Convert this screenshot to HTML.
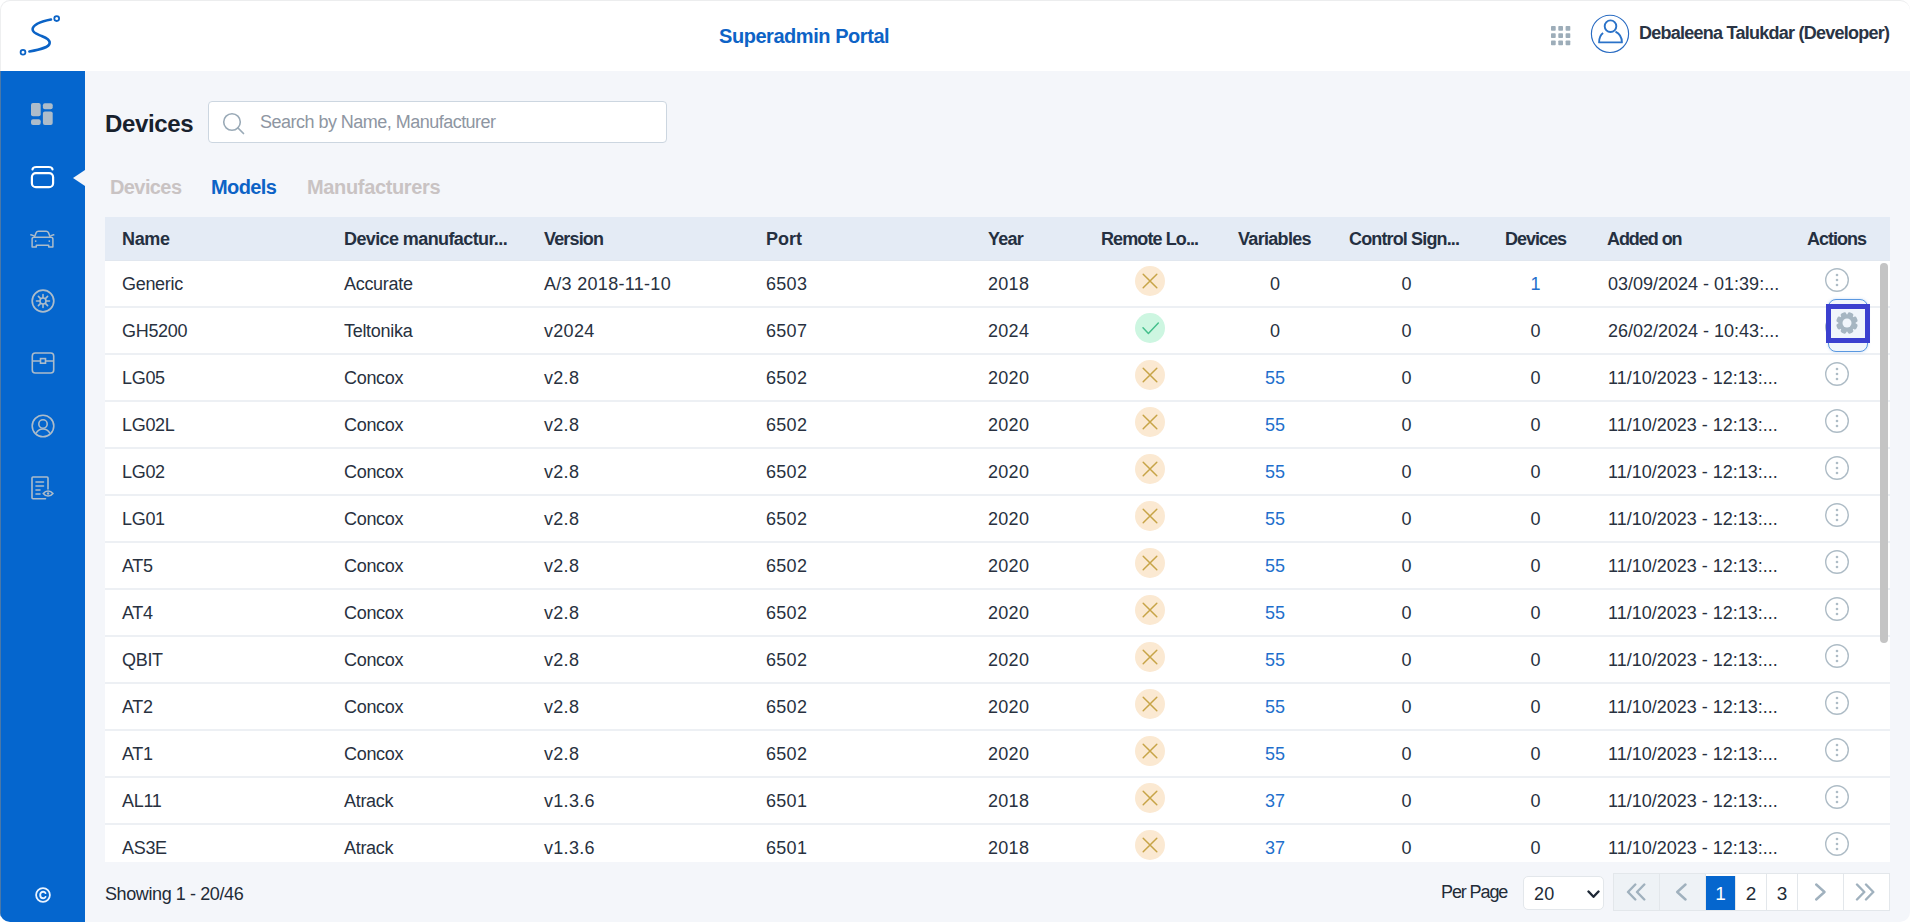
<!DOCTYPE html>
<html>
<head>
<meta charset="utf-8">
<style>
*{box-sizing:border-box;margin:0;padding:0}
html,body{width:1910px;height:922px;overflow:hidden;background:#ffffff;font-family:"Liberation Sans",sans-serif;color:#1E2836}
#app{position:absolute;left:0;top:0;width:1910px;height:922px;border-radius:10px;overflow:hidden;background:#F4F6FA}
#frame{position:absolute;left:0;top:0;width:1910px;height:71px;border-radius:10px 10px 0 0;border-top:1px solid #ECEDEE;border-left:1px solid #EEEFF0;pointer-events:none}
#hdr{position:absolute;left:0;top:0;width:1910px;height:71px;background:#fff}
#side{position:absolute;left:0;top:71px;width:85px;height:851px;background:#0566CE}
.abs{position:absolute}
.portal{position:absolute;left:719px;top:25.2px;font-size:20px;font-weight:bold;color:#0D63C6;letter-spacing:-0.45px;white-space:nowrap}
.uname{position:absolute;left:1639px;top:22.5px;font-size:18px;font-weight:bold;color:#2A3444;letter-spacing:-0.75px;white-space:nowrap}
.title{position:absolute;left:105px;top:110px;font-size:24px;font-weight:bold;color:#18212D;letter-spacing:-0.35px}
#search{position:absolute;left:208px;top:101px;width:459px;height:42px;background:#fff;border:1px solid #CCD6E0;border-radius:4px}
#search .ph{position:absolute;left:51px;top:10.2px;font-size:18px;color:#8E96A2;white-space:nowrap;letter-spacing:-0.52px}
.tab{position:absolute;top:176px;font-size:20px;font-weight:bold;white-space:nowrap;letter-spacing:-0.6px}
#thead{position:absolute;left:105px;top:217px;width:1785px;height:44px;background:#E4EBF5;border-bottom:1px solid #E1E7EF}
.h{position:absolute;top:11.5px;font-size:18px;font-weight:bold;color:#253041;white-space:nowrap;letter-spacing:-0.35px}
#tbody{position:absolute;left:105px;top:261px;width:1785px;height:601px;overflow:hidden}
.row{position:absolute;left:0;width:1785px;height:47px;background:#fff;border-bottom:2px solid #EDF0F4}
.t{position:absolute;top:12.5px;font-size:18px;color:#283140;white-space:nowrap;letter-spacing:-0.3px}
.t.d{letter-spacing:0.3px}
.c{position:absolute;top:12.5px;width:80px;text-align:center;font-size:18px;color:#283140;white-space:nowrap}
.c.blue{color:#1F6FCC}
.ic{position:absolute;top:5px;width:30px;height:30px}
.ic svg,.act svg{display:block}
.act{position:absolute;top:6px;width:26px;height:26px}
#scroll{position:absolute;left:1880px;top:263px;width:8px;height:380px;background:#C4C4C4;border-radius:4px}
.foot{position:absolute;font-size:18px;color:#222B37;white-space:nowrap;letter-spacing:-0.4px}
#sel{position:absolute;left:1523px;top:876px;width:81px;height:34px;background:#fff;border:1px solid #E3E7EB;border-radius:5px}
#pag{position:absolute;left:1613px;top:873px;width:277px;height:38px;background:#fff;border:1px solid #E3E7EB}
.pc{position:absolute;top:0;height:36px;border-right:1px solid #E3E7EB;font-size:19px;color:#222B37;text-align:center;line-height:36px;padding-top:1.5px}
</style>
</head>
<body>
<div id="app">
  <div id="hdr">
    <svg class="abs" style="left:16px;top:13px" width="48" height="46" viewBox="16 13 48 46">
      <path d="M51 19.6 C44 21 33.2 23.5 32.6 29.2 C32.3 33 38 34.6 41.2 35.9 C45 37.4 49.9 39.2 49.7 42.9 C49.4 47.6 40 49.6 29.4 51.5" fill="none" stroke="#0B63C6" stroke-width="2.6" stroke-linecap="round"/>
      <circle cx="56.7" cy="18.6" r="2.4" fill="none" stroke="#0B63C6" stroke-width="1.8"/>
      <circle cx="23" cy="52.3" r="2.4" fill="none" stroke="#0B63C6" stroke-width="1.8"/>
    </svg>
    <div class="portal">Superadmin Portal</div>
    <svg class="abs" style="left:1550.6px;top:26.3px" width="20" height="20" viewBox="0 0 20 20">
      <g fill="#9DADB9"><rect x="0.0" y="0.0" width="4.7" height="4.8" rx="0.8"/><rect x="7.3" y="0.0" width="4.7" height="4.8" rx="0.8"/><rect x="14.6" y="0.0" width="4.7" height="4.8" rx="0.8"/><rect x="0.0" y="7.2" width="4.7" height="4.8" rx="0.8"/><rect x="7.3" y="7.2" width="4.7" height="4.8" rx="0.8"/><rect x="14.6" y="7.2" width="4.7" height="4.8" rx="0.8"/><rect x="0.0" y="14.4" width="4.7" height="4.8" rx="0.8"/><rect x="7.3" y="14.4" width="4.7" height="4.8" rx="0.8"/><rect x="14.6" y="14.4" width="4.7" height="4.8" rx="0.8"/></g>
    </svg>
    <svg class="abs" style="left:1590px;top:14px" width="40" height="40" viewBox="0 0 40 40">
      <circle cx="20" cy="19.85" r="18.6" fill="none" stroke="#2A6CC2" stroke-width="1.15"/>
      <circle cx="20.5" cy="12.2" r="5.8" fill="none" stroke="#2A72C8" stroke-width="1.9"/>
      <path d="M13.1 18.9 C10.3 20.9 9.1 24.3 9.1 28.4 L31.9 28.4 C31.9 24 29.6 19.6 25.5 17.6" fill="none" stroke="#2A72C8" stroke-width="1.9" stroke-linejoin="round"/>
    </svg>
    <div class="uname">Debaleena Talukdar (Developer)</div>
  </div>

  <div id="side">
    <!-- dashboard -->
    <svg class="abs" style="left:31.4px;top:31.8px" width="23" height="23" viewBox="0 0 23 23">
      <g fill="#ADBCCA">
        <rect x="0" y="0" width="9.7" height="13.3" rx="2"/>
        <rect x="0" y="16.2" width="9.7" height="5.8" rx="2"/>
        <rect x="11.9" y="0.3" width="9.8" height="6" rx="2"/>
        <rect x="11.9" y="8.5" width="9.8" height="13.5" rx="2"/>
      </g>
    </svg>
    <!-- cards (active) -->
    <svg class="abs" style="left:30px;top:93px" width="25" height="26" viewBox="0 0 25 26">
      <path d="M2.5 5.5 C2.6 3.8 3.8 3 6.5 3 L18.5 3 C21.2 3 22.4 3.8 22.5 5.5" fill="none" stroke="#fff" stroke-width="2.2" stroke-linecap="round"/>
      <rect x="1.9" y="9.1" width="21.2" height="14.1" rx="4" fill="none" stroke="#fff" stroke-width="2.2"/>
    </svg>
    <svg class="abs" style="left:73px;top:98.5px" width="12" height="16" viewBox="0 0 12 16"><path d="M12 0 L0 8 L12 16 Z" fill="#F4F6FA"/></svg>
    <!-- car -->
    <svg class="abs" style="left:30px;top:158px" width="25" height="20" viewBox="0 0 25 20">
      <g fill="none" stroke="#ADBCCA" stroke-width="1.5" stroke-linejoin="round" stroke-linecap="round">
        <path d="M4.3 8.3 L6.2 3.6 C6.6 2.7 7.3 2.3 8.4 2.3 L16.2 2.3 C17.3 2.3 18 2.7 18.4 3.6 L20.3 8.3"/>
        <path d="M2.1 10.3 C2.1 9 2.8 8.3 4 8.3 L21 8.3 C22.2 8.3 22.9 9 22.9 10.3 L22.9 18 L18.7 18 L18.7 16.2 L6.3 16.2 L6.3 18 L2.1 18 Z"/>
        <path d="M0.9 5.8 L3.6 6.6 M23.7 5.8 L21 6.6"/>
      </g>
      <circle cx="5.7" cy="12.1" r="0.9" fill="#ADBCCA"/><circle cx="19.3" cy="12.1" r="0.9" fill="#ADBCCA"/>
    </svg>
    <!-- sun -->
    <svg class="abs" style="left:30.5px;top:218px" width="24" height="24" viewBox="0 0 24 24">
      <circle cx="12" cy="12" r="10.8" fill="none" stroke="#ADBCCA" stroke-width="1.7"/>
      <g stroke="#ADBCCA" stroke-width="1.6" stroke-linecap="round">
        <path d="M12 5.5 L12 18.5 M5.5 12 L18.5 12 M7.4 7.4 L16.6 16.6 M16.6 7.4 L7.4 16.6"/>
      </g>
      <circle cx="12" cy="12" r="3" fill="#0566CE" stroke="#ADBCCA" stroke-width="1.6"/>
    </svg>
    <!-- box -->
    <svg class="abs" style="left:30.7px;top:280px" width="24" height="24" viewBox="0 0 24 24">
      <g fill="none" stroke="#ADBCCA" stroke-width="1.6">
        <rect x="1.3" y="2" width="21.4" height="20" rx="3"/>
        <path d="M1.3 10 L9.5 10 M14.5 10 L22.7 10"/>
        <rect x="9.5" y="7.6" width="5" height="4.6"/>
      </g>
    </svg>
    <!-- user circle -->
    <svg class="abs" style="left:30.5px;top:343px" width="24" height="24" viewBox="0 0 24 24">
      <g fill="none" stroke="#ADBCCA" stroke-width="1.6">
        <circle cx="12" cy="12" r="10.8"/>
        <circle cx="12" cy="10" r="4.2"/>
        <path d="M5 19.5 C6.5 16.5 9 15 12 15 C15 15 17.5 16.5 19 19.5"/>
      </g>
    </svg>
    <!-- doc eye -->
    <svg class="abs" style="left:31px;top:405px" width="24" height="25" viewBox="0 0 24 25">
      <g fill="none" stroke="#ADBCCA" stroke-width="1.6" stroke-linecap="round">
        <path d="M14.5 22.8 L2 22.8 C1.4 22.8 1 22.4 1 21.8 L1 2 C1 1.4 1.4 1 2 1 L16 1 C16.6 1 17 1.4 17 2 L17 13"/>
        <path d="M5 6 L12.5 6 M5 10 L12.5 10 M5 14 L9 14 M5 18 L9 18"/>
        <path d="M12.3 17.5 C13.6 15.8 15.2 15 17.1 15 C19 15 20.6 15.8 21.9 17.5 C20.6 19.2 19 20 17.1 20 C15.2 20 13.6 19.2 12.3 17.5 Z"/>
      </g>
      <circle cx="17.1" cy="17.5" r="1.2" fill="#ADBCCA"/>
    </svg>
    <!-- copyright -->
    <svg class="abs" style="left:34.5px;top:815.5px" width="16" height="16" viewBox="0 0 16 16">
      <circle cx="8" cy="8" r="6.9" fill="none" stroke="#EAF3FF" stroke-width="1.8"/>
      <path d="M10.5 6.1 C10 5.1 9.2 4.7 8.2 4.7 C6.4 4.7 5.2 6.1 5.2 8 C5.2 9.9 6.4 11.3 8.2 11.3 C9.2 11.3 10 10.9 10.5 9.9" fill="none" stroke="#EAF3FF" stroke-width="1.9" stroke-linecap="round"/>
    </svg>
  </div>

  <div class="abs" style="left:0;top:71px;width:1px;height:851px;background:#4A78A8"></div>
  <div class="title">Devices</div>
  <div id="search">
    <svg class="abs" style="left:13px;top:10px" width="24" height="24" viewBox="0 0 24 24">
      <circle cx="10" cy="10" r="8.3" fill="none" stroke="#9AAAB7" stroke-width="1.6"/>
      <path d="M16 16 L21.5 21.5" stroke="#9AAAB7" stroke-width="1.7" stroke-linecap="round"/>
    </svg>
    <div class="ph">Search by Name, Manufacturer</div>
  </div>
  <div class="tab" style="left:110px;color:#C9C3C3">Devices</div>
  <div class="tab" style="left:211px;color:#0D63C6">Models</div>
  <div class="tab" style="left:307px;color:#C9C3C3;letter-spacing:-0.35px">Manufacturers</div>

  <div id="thead"><span class="h" style="left:17px;letter-spacing:-0.35px">Name</span><span class="h" style="left:239px;letter-spacing:-0.6px">Device manufactur...</span><span class="h" style="left:439px;letter-spacing:-0.85px">Version</span><span class="h" style="left:661px;letter-spacing:0px">Port</span><span class="h" style="left:883px;letter-spacing:-0.78px">Year</span><span class="h" style="left:996px;letter-spacing:-0.9px">Remote Lo...</span><span class="h" style="left:1133px;letter-spacing:-0.69px">Variables</span><span class="h" style="left:1244px;letter-spacing:-0.86px">Control Sign...</span><span class="h" style="left:1400px;letter-spacing:-1.0px">Devices</span><span class="h" style="left:1502px;letter-spacing:-1.06px">Added on</span><span class="h" style="left:1702px;letter-spacing:-1.0px">Actions</span></div>
  <div id="tbody">
<div class="row" style="top:0px"><span class="t" style="left:17px">Generic</span><span class="t" style="left:239px">Accurate</span><span class="t d" style="left:439px">A/3 2018-11-10</span><span class="t d" style="left:661px">6503</span><span class="t d" style="left:883px">2018</span><span class="ic" style="left:1030px"><svg width="30" height="30" viewBox="0 0 30 30"><circle cx="15" cy="15" r="15" fill="#FBE9D2"/><path d="M8.2 8.2 L21.8 21.8 M21.8 8.2 L8.2 21.8" stroke="#C7A447" stroke-width="1.5" stroke-linecap="round"/></svg></span><span class="c" style="left:1130px">0</span><span class="c" style="left:1261.5px">0</span><span class="c blue" style="left:1390.5px">1</span><span class="t" style="left:1503px;letter-spacing:0px">03/09/2024 - 01:39:...</span><span class="act" style="left:1719px"><svg width="26" height="26" viewBox="0 0 26 26"><circle cx="13" cy="13" r="11.3" fill="none" stroke="#AEBCC6" stroke-width="1.4"/><circle cx="13" cy="8" r="1.3" fill="#AEBCC6"/><circle cx="13" cy="13" r="1.3" fill="#AEBCC6"/><circle cx="13" cy="18" r="1.3" fill="#AEBCC6"/></svg></span></div>
<div class="row" style="top:47px"><span class="t" style="left:17px">GH5200</span><span class="t" style="left:239px">Teltonika</span><span class="t d" style="left:439px">v2024</span><span class="t d" style="left:661px">6507</span><span class="t d" style="left:883px">2024</span><span class="ic" style="left:1030px"><svg width="30" height="30" viewBox="0 0 30 30"><circle cx="15" cy="15" r="15" fill="#CDF6E1"/><path d="M8 14.8 L13.4 20.4 L23.3 10" fill="none" stroke="#45BF8C" stroke-width="1.5" stroke-linecap="round" stroke-linejoin="round"/></svg></span><span class="c" style="left:1130px">0</span><span class="c" style="left:1261.5px">0</span><span class="c" style="left:1390.5px">0</span><span class="t" style="left:1503px;letter-spacing:0px">26/02/2024 - 10:43:...</span><span class="act" style="left:1719px"><svg width="26" height="26" viewBox="0 0 26 26"><circle cx="13" cy="13" r="11.3" fill="none" stroke="#AEBCC6" stroke-width="1.4"/><circle cx="13" cy="8" r="1.3" fill="#AEBCC6"/><circle cx="13" cy="13" r="1.3" fill="#AEBCC6"/><circle cx="13" cy="18" r="1.3" fill="#AEBCC6"/></svg></span></div>
<div class="row" style="top:94px"><span class="t" style="left:17px">LG05</span><span class="t" style="left:239px">Concox</span><span class="t d" style="left:439px">v2.8</span><span class="t d" style="left:661px">6502</span><span class="t d" style="left:883px">2020</span><span class="ic" style="left:1030px"><svg width="30" height="30" viewBox="0 0 30 30"><circle cx="15" cy="15" r="15" fill="#FBE9D2"/><path d="M8.2 8.2 L21.8 21.8 M21.8 8.2 L8.2 21.8" stroke="#C7A447" stroke-width="1.5" stroke-linecap="round"/></svg></span><span class="c blue" style="left:1130px">55</span><span class="c" style="left:1261.5px">0</span><span class="c" style="left:1390.5px">0</span><span class="t" style="left:1503px;letter-spacing:0px">11/10/2023 - 12:13:...</span><span class="act" style="left:1719px"><svg width="26" height="26" viewBox="0 0 26 26"><circle cx="13" cy="13" r="11.3" fill="none" stroke="#AEBCC6" stroke-width="1.4"/><circle cx="13" cy="8" r="1.3" fill="#AEBCC6"/><circle cx="13" cy="13" r="1.3" fill="#AEBCC6"/><circle cx="13" cy="18" r="1.3" fill="#AEBCC6"/></svg></span></div>
<div class="row" style="top:141px"><span class="t" style="left:17px">LG02L</span><span class="t" style="left:239px">Concox</span><span class="t d" style="left:439px">v2.8</span><span class="t d" style="left:661px">6502</span><span class="t d" style="left:883px">2020</span><span class="ic" style="left:1030px"><svg width="30" height="30" viewBox="0 0 30 30"><circle cx="15" cy="15" r="15" fill="#FBE9D2"/><path d="M8.2 8.2 L21.8 21.8 M21.8 8.2 L8.2 21.8" stroke="#C7A447" stroke-width="1.5" stroke-linecap="round"/></svg></span><span class="c blue" style="left:1130px">55</span><span class="c" style="left:1261.5px">0</span><span class="c" style="left:1390.5px">0</span><span class="t" style="left:1503px;letter-spacing:0px">11/10/2023 - 12:13:...</span><span class="act" style="left:1719px"><svg width="26" height="26" viewBox="0 0 26 26"><circle cx="13" cy="13" r="11.3" fill="none" stroke="#AEBCC6" stroke-width="1.4"/><circle cx="13" cy="8" r="1.3" fill="#AEBCC6"/><circle cx="13" cy="13" r="1.3" fill="#AEBCC6"/><circle cx="13" cy="18" r="1.3" fill="#AEBCC6"/></svg></span></div>
<div class="row" style="top:188px"><span class="t" style="left:17px">LG02</span><span class="t" style="left:239px">Concox</span><span class="t d" style="left:439px">v2.8</span><span class="t d" style="left:661px">6502</span><span class="t d" style="left:883px">2020</span><span class="ic" style="left:1030px"><svg width="30" height="30" viewBox="0 0 30 30"><circle cx="15" cy="15" r="15" fill="#FBE9D2"/><path d="M8.2 8.2 L21.8 21.8 M21.8 8.2 L8.2 21.8" stroke="#C7A447" stroke-width="1.5" stroke-linecap="round"/></svg></span><span class="c blue" style="left:1130px">55</span><span class="c" style="left:1261.5px">0</span><span class="c" style="left:1390.5px">0</span><span class="t" style="left:1503px;letter-spacing:0px">11/10/2023 - 12:13:...</span><span class="act" style="left:1719px"><svg width="26" height="26" viewBox="0 0 26 26"><circle cx="13" cy="13" r="11.3" fill="none" stroke="#AEBCC6" stroke-width="1.4"/><circle cx="13" cy="8" r="1.3" fill="#AEBCC6"/><circle cx="13" cy="13" r="1.3" fill="#AEBCC6"/><circle cx="13" cy="18" r="1.3" fill="#AEBCC6"/></svg></span></div>
<div class="row" style="top:235px"><span class="t" style="left:17px">LG01</span><span class="t" style="left:239px">Concox</span><span class="t d" style="left:439px">v2.8</span><span class="t d" style="left:661px">6502</span><span class="t d" style="left:883px">2020</span><span class="ic" style="left:1030px"><svg width="30" height="30" viewBox="0 0 30 30"><circle cx="15" cy="15" r="15" fill="#FBE9D2"/><path d="M8.2 8.2 L21.8 21.8 M21.8 8.2 L8.2 21.8" stroke="#C7A447" stroke-width="1.5" stroke-linecap="round"/></svg></span><span class="c blue" style="left:1130px">55</span><span class="c" style="left:1261.5px">0</span><span class="c" style="left:1390.5px">0</span><span class="t" style="left:1503px;letter-spacing:0px">11/10/2023 - 12:13:...</span><span class="act" style="left:1719px"><svg width="26" height="26" viewBox="0 0 26 26"><circle cx="13" cy="13" r="11.3" fill="none" stroke="#AEBCC6" stroke-width="1.4"/><circle cx="13" cy="8" r="1.3" fill="#AEBCC6"/><circle cx="13" cy="13" r="1.3" fill="#AEBCC6"/><circle cx="13" cy="18" r="1.3" fill="#AEBCC6"/></svg></span></div>
<div class="row" style="top:282px"><span class="t" style="left:17px">AT5</span><span class="t" style="left:239px">Concox</span><span class="t d" style="left:439px">v2.8</span><span class="t d" style="left:661px">6502</span><span class="t d" style="left:883px">2020</span><span class="ic" style="left:1030px"><svg width="30" height="30" viewBox="0 0 30 30"><circle cx="15" cy="15" r="15" fill="#FBE9D2"/><path d="M8.2 8.2 L21.8 21.8 M21.8 8.2 L8.2 21.8" stroke="#C7A447" stroke-width="1.5" stroke-linecap="round"/></svg></span><span class="c blue" style="left:1130px">55</span><span class="c" style="left:1261.5px">0</span><span class="c" style="left:1390.5px">0</span><span class="t" style="left:1503px;letter-spacing:0px">11/10/2023 - 12:13:...</span><span class="act" style="left:1719px"><svg width="26" height="26" viewBox="0 0 26 26"><circle cx="13" cy="13" r="11.3" fill="none" stroke="#AEBCC6" stroke-width="1.4"/><circle cx="13" cy="8" r="1.3" fill="#AEBCC6"/><circle cx="13" cy="13" r="1.3" fill="#AEBCC6"/><circle cx="13" cy="18" r="1.3" fill="#AEBCC6"/></svg></span></div>
<div class="row" style="top:329px"><span class="t" style="left:17px">AT4</span><span class="t" style="left:239px">Concox</span><span class="t d" style="left:439px">v2.8</span><span class="t d" style="left:661px">6502</span><span class="t d" style="left:883px">2020</span><span class="ic" style="left:1030px"><svg width="30" height="30" viewBox="0 0 30 30"><circle cx="15" cy="15" r="15" fill="#FBE9D2"/><path d="M8.2 8.2 L21.8 21.8 M21.8 8.2 L8.2 21.8" stroke="#C7A447" stroke-width="1.5" stroke-linecap="round"/></svg></span><span class="c blue" style="left:1130px">55</span><span class="c" style="left:1261.5px">0</span><span class="c" style="left:1390.5px">0</span><span class="t" style="left:1503px;letter-spacing:0px">11/10/2023 - 12:13:...</span><span class="act" style="left:1719px"><svg width="26" height="26" viewBox="0 0 26 26"><circle cx="13" cy="13" r="11.3" fill="none" stroke="#AEBCC6" stroke-width="1.4"/><circle cx="13" cy="8" r="1.3" fill="#AEBCC6"/><circle cx="13" cy="13" r="1.3" fill="#AEBCC6"/><circle cx="13" cy="18" r="1.3" fill="#AEBCC6"/></svg></span></div>
<div class="row" style="top:376px"><span class="t" style="left:17px">QBIT</span><span class="t" style="left:239px">Concox</span><span class="t d" style="left:439px">v2.8</span><span class="t d" style="left:661px">6502</span><span class="t d" style="left:883px">2020</span><span class="ic" style="left:1030px"><svg width="30" height="30" viewBox="0 0 30 30"><circle cx="15" cy="15" r="15" fill="#FBE9D2"/><path d="M8.2 8.2 L21.8 21.8 M21.8 8.2 L8.2 21.8" stroke="#C7A447" stroke-width="1.5" stroke-linecap="round"/></svg></span><span class="c blue" style="left:1130px">55</span><span class="c" style="left:1261.5px">0</span><span class="c" style="left:1390.5px">0</span><span class="t" style="left:1503px;letter-spacing:0px">11/10/2023 - 12:13:...</span><span class="act" style="left:1719px"><svg width="26" height="26" viewBox="0 0 26 26"><circle cx="13" cy="13" r="11.3" fill="none" stroke="#AEBCC6" stroke-width="1.4"/><circle cx="13" cy="8" r="1.3" fill="#AEBCC6"/><circle cx="13" cy="13" r="1.3" fill="#AEBCC6"/><circle cx="13" cy="18" r="1.3" fill="#AEBCC6"/></svg></span></div>
<div class="row" style="top:423px"><span class="t" style="left:17px">AT2</span><span class="t" style="left:239px">Concox</span><span class="t d" style="left:439px">v2.8</span><span class="t d" style="left:661px">6502</span><span class="t d" style="left:883px">2020</span><span class="ic" style="left:1030px"><svg width="30" height="30" viewBox="0 0 30 30"><circle cx="15" cy="15" r="15" fill="#FBE9D2"/><path d="M8.2 8.2 L21.8 21.8 M21.8 8.2 L8.2 21.8" stroke="#C7A447" stroke-width="1.5" stroke-linecap="round"/></svg></span><span class="c blue" style="left:1130px">55</span><span class="c" style="left:1261.5px">0</span><span class="c" style="left:1390.5px">0</span><span class="t" style="left:1503px;letter-spacing:0px">11/10/2023 - 12:13:...</span><span class="act" style="left:1719px"><svg width="26" height="26" viewBox="0 0 26 26"><circle cx="13" cy="13" r="11.3" fill="none" stroke="#AEBCC6" stroke-width="1.4"/><circle cx="13" cy="8" r="1.3" fill="#AEBCC6"/><circle cx="13" cy="13" r="1.3" fill="#AEBCC6"/><circle cx="13" cy="18" r="1.3" fill="#AEBCC6"/></svg></span></div>
<div class="row" style="top:470px"><span class="t" style="left:17px">AT1</span><span class="t" style="left:239px">Concox</span><span class="t d" style="left:439px">v2.8</span><span class="t d" style="left:661px">6502</span><span class="t d" style="left:883px">2020</span><span class="ic" style="left:1030px"><svg width="30" height="30" viewBox="0 0 30 30"><circle cx="15" cy="15" r="15" fill="#FBE9D2"/><path d="M8.2 8.2 L21.8 21.8 M21.8 8.2 L8.2 21.8" stroke="#C7A447" stroke-width="1.5" stroke-linecap="round"/></svg></span><span class="c blue" style="left:1130px">55</span><span class="c" style="left:1261.5px">0</span><span class="c" style="left:1390.5px">0</span><span class="t" style="left:1503px;letter-spacing:0px">11/10/2023 - 12:13:...</span><span class="act" style="left:1719px"><svg width="26" height="26" viewBox="0 0 26 26"><circle cx="13" cy="13" r="11.3" fill="none" stroke="#AEBCC6" stroke-width="1.4"/><circle cx="13" cy="8" r="1.3" fill="#AEBCC6"/><circle cx="13" cy="13" r="1.3" fill="#AEBCC6"/><circle cx="13" cy="18" r="1.3" fill="#AEBCC6"/></svg></span></div>
<div class="row" style="top:517px"><span class="t" style="left:17px">AL11</span><span class="t" style="left:239px">Atrack</span><span class="t d" style="left:439px">v1.3.6</span><span class="t d" style="left:661px">6501</span><span class="t d" style="left:883px">2018</span><span class="ic" style="left:1030px"><svg width="30" height="30" viewBox="0 0 30 30"><circle cx="15" cy="15" r="15" fill="#FBE9D2"/><path d="M8.2 8.2 L21.8 21.8 M21.8 8.2 L8.2 21.8" stroke="#C7A447" stroke-width="1.5" stroke-linecap="round"/></svg></span><span class="c blue" style="left:1130px">37</span><span class="c" style="left:1261.5px">0</span><span class="c" style="left:1390.5px">0</span><span class="t" style="left:1503px;letter-spacing:0px">11/10/2023 - 12:13:...</span><span class="act" style="left:1719px"><svg width="26" height="26" viewBox="0 0 26 26"><circle cx="13" cy="13" r="11.3" fill="none" stroke="#AEBCC6" stroke-width="1.4"/><circle cx="13" cy="8" r="1.3" fill="#AEBCC6"/><circle cx="13" cy="13" r="1.3" fill="#AEBCC6"/><circle cx="13" cy="18" r="1.3" fill="#AEBCC6"/></svg></span></div>
<div class="row" style="top:564px"><span class="t" style="left:17px">AS3E</span><span class="t" style="left:239px">Atrack</span><span class="t d" style="left:439px">v1.3.6</span><span class="t d" style="left:661px">6501</span><span class="t d" style="left:883px">2018</span><span class="ic" style="left:1030px"><svg width="30" height="30" viewBox="0 0 30 30"><circle cx="15" cy="15" r="15" fill="#FBE9D2"/><path d="M8.2 8.2 L21.8 21.8 M21.8 8.2 L8.2 21.8" stroke="#C7A447" stroke-width="1.5" stroke-linecap="round"/></svg></span><span class="c blue" style="left:1130px">37</span><span class="c" style="left:1261.5px">0</span><span class="c" style="left:1390.5px">0</span><span class="t" style="left:1503px;letter-spacing:0px">11/10/2023 - 12:13:...</span><span class="act" style="left:1719px"><svg width="26" height="26" viewBox="0 0 26 26"><circle cx="13" cy="13" r="11.3" fill="none" stroke="#AEBCC6" stroke-width="1.4"/><circle cx="13" cy="8" r="1.3" fill="#AEBCC6"/><circle cx="13" cy="13" r="1.3" fill="#AEBCC6"/><circle cx="13" cy="18" r="1.3" fill="#AEBCC6"/></svg></span></div>
  </div>
  <!-- focused gear button on row 2 -->
  <div class="abs" style="left:1828px;top:299px;width:40px;height:53px;border:1px solid #5A98E0;border-radius:8px;background:#F1F6FC;box-shadow:0 0 3px rgba(90,150,230,0.35)"></div>
  <div class="abs" style="left:1826px;top:304px;width:44px;height:39px;border:5px solid #3B40CF;background:#F0F5FB"></div>
  <svg class="abs" style="left:1835.2px;top:311px" width="24" height="24" viewBox="-12 -12 24 24">
    <g fill="#A6B6C2"><rect x="-3" y="-10.9" width="6" height="5.5" rx="2" transform="rotate(22.5)"/><rect x="-3" y="-10.9" width="6" height="5.5" rx="2" transform="rotate(67.5)"/><rect x="-3" y="-10.9" width="6" height="5.5" rx="2" transform="rotate(112.5)"/><rect x="-3" y="-10.9" width="6" height="5.5" rx="2" transform="rotate(157.5)"/><rect x="-3" y="-10.9" width="6" height="5.5" rx="2" transform="rotate(202.5)"/><rect x="-3" y="-10.9" width="6" height="5.5" rx="2" transform="rotate(247.5)"/><rect x="-3" y="-10.9" width="6" height="5.5" rx="2" transform="rotate(292.5)"/><rect x="-3" y="-10.9" width="6" height="5.5" rx="2" transform="rotate(337.5)"/><circle r="8.4"/></g>
    <circle r="4.5" fill="#F0F5FB"/>
  </svg>
  <div id="scroll"></div>

  <div class="foot" style="left:105px;top:883.5px">Showing 1 - 20/46</div>
  <div class="foot" style="left:1441px;top:882px;letter-spacing:-1.1px">Per Page</div>
  <div id="sel">
    <div class="abs" style="left:10px;top:7px;font-size:18px;color:#222B37;letter-spacing:0.3px">20</div>
    <svg class="abs" style="left:63px;top:13px" width="13" height="9" viewBox="0 0 13 9"><path d="M1.5 1.5 L6.5 6.8 L11.5 1.5" fill="none" stroke="#1E2836" stroke-width="2.4" stroke-linecap="round" stroke-linejoin="round"/></svg>
  </div>
  <div id="pag">
    <div class="pc" style="left:0;width:46px;background:#EEF2F6">
      <svg style="position:absolute;left:10.6px;top:8.5px" width="22" height="20" viewBox="0 0 22 20"><path d="M10.3 1.5 L3 9 L10.3 16.5 M19.3 1.5 L12 9 L19.3 16.5" fill="none" stroke="#A0B1BE" stroke-width="2.4" stroke-linecap="round" stroke-linejoin="round"/></svg>
    </div>
    <div class="pc" style="left:46px;width:46px;background:#EEF2F6">
      <svg style="position:absolute;left:15.4px;top:8.5px" width="14" height="20" viewBox="0 0 14 20"><path d="M10.5 1.5 L2.2 9 L10.5 16.5" fill="none" stroke="#A0B1BE" stroke-width="2.4" stroke-linecap="round" stroke-linejoin="round"/></svg>
    </div>
    <div class="pc" style="left:92px;width:30px;top:2px;height:34px;background:#0566CE;color:#fff;line-height:34px;padding-top:0.5px">1</div>
    <div class="pc" style="left:122px;width:31px">2</div>
    <div class="pc" style="left:153px;width:31px">3</div>
    <div class="pc" style="left:184px;width:46px">
      <svg style="position:absolute;left:15.9px;top:8.5px" width="14" height="20" viewBox="0 0 14 20"><path d="M2.2 1.5 L10.5 9 L2.2 16.5" fill="none" stroke="#A0B1BE" stroke-width="2.4" stroke-linecap="round" stroke-linejoin="round"/></svg>
    </div>
    <div class="pc" style="left:230px;width:46px;border-right:none">
      <svg style="position:absolute;left:10.2px;top:8.5px" width="22" height="20" viewBox="0 0 22 20"><path d="M3 1.5 L10.3 9 L3 16.5 M12 1.5 L19.3 9 L12 16.5" fill="none" stroke="#A0B1BE" stroke-width="2.4" stroke-linecap="round" stroke-linejoin="round"/></svg>
    </div>
  </div>
</div>
<div id="frame"></div>
</body>
</html>
